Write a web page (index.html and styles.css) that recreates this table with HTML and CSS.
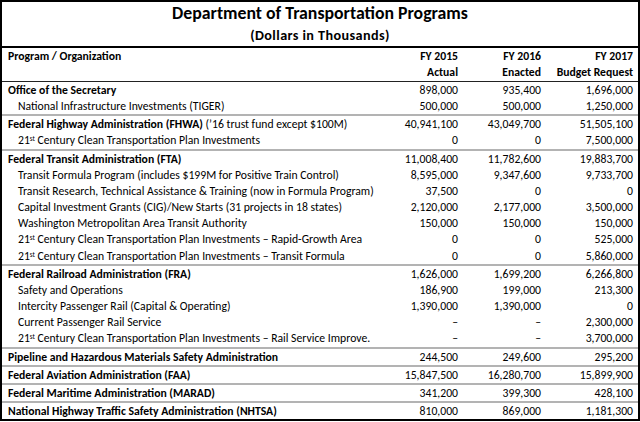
FILE: index.html
```html
<!DOCTYPE html>
<html>
<head>
<meta charset="utf-8">
<link rel="stylesheet" href="styles.css">
</head>
<body>
<div class="sheet">
  <div class="title-block">
    <div class="title">Department of Transportation Programs</div>
    <div class="subtitle">(Dollars in Thousands)</div>
  </div>
  <div class="row head">
    <div class="lbl">Program / Organization</div>
    <div class="num">FY 2015<br>Actual</div>
    <div class="num">FY 2016<br>Enacted</div>
    <div class="num">FY 2017<br>Budget Request</div>
  </div>

  <div class="group">
    <div class="row main"><div class="lbl">Office of the Secretary</div><div class="num">898,000</div><div class="num">935,400</div><div class="num">1,696,000</div></div>
    <div class="row sub"><div class="lbl">National Infrastructure Investments (TIGER)</div><div class="num">500,000</div><div class="num">500,000</div><div class="num">1,250,000</div></div>
  </div>

  <div class="group">
    <div class="row main"><div class="lbl"><b>Federal Highway Administration (FHWA)</b> (’16 trust fund except $100M)</div><div class="num">40,941,100</div><div class="num">43,049,700</div><div class="num">51,505,100</div></div>
    <div class="row sub"><div class="lbl">21<sup>st</sup> Century Clean Transportation Plan Investments</div><div class="num">0</div><div class="num">0</div><div class="num">7,500,000</div></div>
  </div>

  <div class="group">
    <div class="row main"><div class="lbl">Federal Transit Administration (FTA)</div><div class="num">11,008,400</div><div class="num">11,782,600</div><div class="num">19,883,700</div></div>
    <div class="row sub"><div class="lbl">Transit Formula Program (includes $199M for Positive Train Control)</div><div class="num">8,595,000</div><div class="num">9,347,600</div><div class="num">9,733,700</div></div>
    <div class="row sub"><div class="lbl">Transit Research, Technical Assistance &amp; Training (now in Formula Program)</div><div class="num">37,500</div><div class="num">0</div><div class="num">0</div></div>
    <div class="row sub"><div class="lbl">Capital Investment Grants (CIG)/New Starts (31 projects in 18 states)</div><div class="num">2,120,000</div><div class="num">2,177,000</div><div class="num">3,500,000</div></div>
    <div class="row sub"><div class="lbl">Washington Metropolitan Area Transit Authority</div><div class="num">150,000</div><div class="num">150,000</div><div class="num">150,000</div></div>
    <div class="row sub"><div class="lbl">21<sup>st</sup> Century Clean Transportation Plan Investments – Rapid-Growth Area</div><div class="num">0</div><div class="num">0</div><div class="num">525,000</div></div>
    <div class="row sub"><div class="lbl">21<sup>st</sup> Century Clean Transportation Plan Investments – Transit Formula</div><div class="num">0</div><div class="num">0</div><div class="num">5,860,000</div></div>
  </div>

  <div class="group">
    <div class="row main"><div class="lbl">Federal Railroad Administration (FRA)</div><div class="num">1,626,000</div><div class="num">1,699,200</div><div class="num">6,266,800</div></div>
    <div class="row sub"><div class="lbl">Safety and Operations</div><div class="num">186,900</div><div class="num">199,000</div><div class="num">213,300</div></div>
    <div class="row sub"><div class="lbl">Intercity Passenger Rail (Capital &amp; Operating)</div><div class="num">1,390,000</div><div class="num">1,390,000</div><div class="num">0</div></div>
    <div class="row sub"><div class="lbl">Current Passenger Rail Service</div><div class="num">–</div><div class="num">–</div><div class="num">2,300,000</div></div>
    <div class="row sub"><div class="lbl">21<sup>st</sup> Century Clean Transportation Plan Investments – Rail Service Improve.</div><div class="num">–</div><div class="num">–</div><div class="num">3,700,000</div></div>
  </div>

  <div class="group">
    <div class="row main"><div class="lbl">Pipeline and Hazardous Materials Safety Administration</div><div class="num">244,500</div><div class="num">249,600</div><div class="num">295,200</div></div>
  </div>
  <div class="group">
    <div class="row main"><div class="lbl">Federal Aviation Administration (FAA)</div><div class="num">15,847,500</div><div class="num">16,280,700</div><div class="num">15,899,900</div></div>
  </div>
  <div class="group">
    <div class="row main"><div class="lbl">Federal Maritime Administration (MARAD)</div><div class="num">341,200</div><div class="num">399,300</div><div class="num">428,100</div></div>
  </div>
  <div class="group last">
    <div class="row main"><div class="lbl">National Highway Traffic Safety Administration (NHTSA)</div><div class="num">810,000</div><div class="num">869,000</div><div class="num">1,181,300</div></div>
  </div>
</div>
</body>
</html>
```
FILE: styles.css
```css
html, body {
  margin: 0;
  padding: 0;
  background: #ffffff;
}

body {
  font-family: Carlito, Lato, "Open Sans", sans-serif;
  font-size: 11.7px;
  color: #000;
}

.sheet {
  width: 640px;
  box-sizing: border-box;
  border: 2px solid #000;
}

.title-block {
  border-bottom: 2px solid #000;
  text-align: center;
  font-weight: bold;
}

.title {
  font-size: 17.8px;
  line-height: 22px;
}

.subtitle {
  font-size: 14.2px;
  letter-spacing: 0.4px;
  line-height: 22px;
}

.row {
  display: grid;
  grid-template-columns: 1fr 83px 83px 92px;
  padding-right: 5px;
  line-height: 16.15px;
  white-space: nowrap;
}

.lbl {
  padding-left: 6px;
}

.num {
  text-align: right;
}

.head {
  font-weight: bold;
  line-height: 16px;
  padding-bottom: 1px;
  border-bottom: 1px solid #222;
}

.main .lbl {
  font-weight: bold;
}

.main .lbl b {
  font-weight: bold;
}

.group .main .lbl:has(b) {
  font-weight: normal;
}

.sub .lbl {
  padding-left: 16px;
}

.group {
  border-bottom: 2px solid #b3b3b3;
}

.group.last {
  border-bottom: none;
}

sup {
  font-size: 0.6em;
  line-height: 0;
  vertical-align: 0.5em;
}
```
